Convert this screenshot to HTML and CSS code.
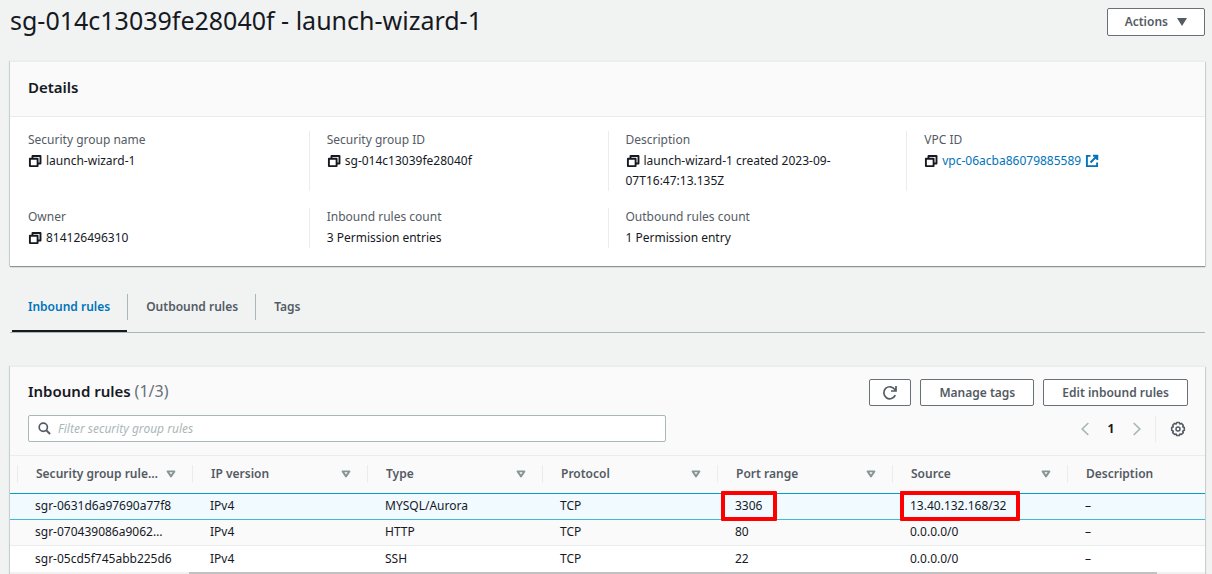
FILE: index.html
```html
<!DOCTYPE html>
<html lang="en">
<head>
<meta charset="utf-8">
<title>sg-014c13039fe28040f - launch-wizard-1</title>
<link rel="stylesheet" href="styles.css">
</head>
<body>
<svg class="sprite" aria-hidden="true">
  <symbol id="copy" viewBox="0 0 14 14"><path d="M4.5 4V2H12.5V9.5H10M1.9 4.7H9.6V12.1H1.9Z" fill="none" stroke="currentColor" stroke-width="1.9" stroke-linejoin="round"/></symbol>
  <symbol id="external" viewBox="0 0 14 14"><path d="M5.500 1.900H1.900V12.100H12.100V8.500M8 1.700H12.300V6M12 2L5.500 8.500" fill="none" stroke="currentColor" stroke-width="1.9"/></symbol>
  <symbol id="sort" viewBox="0 0 10 8"><path d="M1.6 1.4H8.400L5 6.400Z" fill="none" stroke="currentColor" stroke-width="1.900" stroke-linejoin="round"/></symbol>
</svg>
<main class="page">
  <header class="page-header">
    <h1 class="page-title">sg-014c13039fe28040f - launch-wizard-1</h1>
    <button class="button actions" type="button">Actions
      <svg class="caret" viewBox="0 0 10 8" aria-hidden="true"><path d="M0 0H10L5 8Z" fill="currentColor"/></svg>
    </button>
  </header>

  <section class="card">
    <div class="card-header"><h2 class="card-title">Details</h2></div>
    <dl class="details">
      <div class="detail"><dt>Security group name</dt><dd><svg class="icon copy"><use href="#copy"/></svg>launch-wizard-1</dd></div>
      <div class="detail"><dt>Security group ID</dt><dd><svg class="icon copy"><use href="#copy"/></svg>sg-014c13039fe28040f</dd></div>
      <div class="detail"><dt>Description</dt><dd><svg class="icon copy"><use href="#copy"/></svg>launch-wizard-1 created 2023-09-<wbr>07T16:47:13.135Z</dd></div>
      <div class="detail"><dt>VPC ID</dt><dd><svg class="icon copy"><use href="#copy"/></svg><a class="link" href="#vpc">vpc-06acba86079885589<svg class="icon external"><use href="#external"/></svg></a></dd></div>
      <div class="detail"><dt>Owner</dt><dd><svg class="icon copy"><use href="#copy"/></svg>814126496310</dd></div>
      <div class="detail"><dt>Inbound rules count</dt><dd>3 Permission entries</dd></div>
      <div class="detail"><dt>Outbound rules count</dt><dd>1 Permission entry</dd></div>
    </dl>
  </section>

  <nav class="tabs">
    <a class="tab active" href="#inbound">Inbound rules</a>
    <a class="tab" href="#outbound">Outbound rules</a>
    <a class="tab" href="#tags">Tags</a>
  </nav>

  <section class="card rules" id="inbound">
    <div class="rules-header">
      <div class="toolbar">
        <h2 class="card-title">Inbound rules <span class="count">(1/3)</span></h2>
        <div class="buttons">
          <button class="button refresh" type="button" aria-label="Refresh">
            <svg viewBox="0 0 16 16" aria-hidden="true"><path d="M13.3 10.2A6 6 0 1 1 12.8 4.4L14 6M14 1V6H9" fill="none" stroke="currentColor" stroke-width="1.7"/></svg>
          </button>
          <button class="button" type="button">Manage tags</button>
          <button class="button" type="button">Edit inbound rules</button>
        </div>
      </div>
      <div class="toolbar">
        <label class="search">
          <svg viewBox="0 0 14 14" aria-hidden="true"><path d="M9 9L13 13" stroke="currentColor" stroke-width="2.2"/><circle cx="5.7" cy="5.7" r="4.4" fill="none" stroke="currentColor" stroke-width="1.8"/></svg>
          <input type="text" placeholder="Filter security group rules" aria-label="Filter security group rules">
        </label>
        <div class="pager">
          <button class="plain arrow" type="button" aria-label="Previous page"><svg viewBox="0 0 8 14" aria-hidden="true"><path d="M7.3 1L1.2 7L7.3 13" fill="none" stroke="currentColor" stroke-width="1.7"/></svg></button>
          <span class="page-number">1</span>
          <button class="plain arrow" type="button" aria-label="Next page"><svg viewBox="0 0 8 14" aria-hidden="true"><path d="M.7 1L6.8 7L.7 13" fill="none" stroke="currentColor" stroke-width="1.7"/></svg></button>
          <span class="separator"></span>
          <button class="plain settings" type="button" aria-label="Preferences"><svg viewBox="0 0 16 16" aria-hidden="true"><path d="M6.7 1.5h2.6l.6 1.4 1.5-.5 1.9 1.9-.6 1.4 1.6.8v2.8l-1.6.8.6 1.5-1.9 1.9-1.5-.5-.6 1.5H6.7L6.1 13l-1.5.5-1.900-1.900.6-1.500-1.600-.8V6.500l1.600-.8-.6-1.400 1.900-1.900 1.500.5Z" fill="none" stroke="currentColor" stroke-width="1.6" stroke-linejoin="round"/><circle cx="8" cy="8" r="2" fill="none" stroke="currentColor" stroke-width="1.5"/></svg></button>
        </div>
      </div>
    </div>
    <table class="table">
      <colgroup><col class="col-edge"><col class="col"><col class="col"><col class="col"><col class="col"><col class="col"><col class="col"><col></colgroup>
      <thead>
        <tr>
          <td></td>
          <th scope="col"><div class="head">Security group rule…<svg class="sort"><use href="#sort"/></svg></div></th>
          <th scope="col"><div class="head">IP version<svg class="sort"><use href="#sort"/></svg></div></th>
          <th scope="col"><div class="head">Type<svg class="sort"><use href="#sort"/></svg></div></th>
          <th scope="col"><div class="head">Protocol<svg class="sort"><use href="#sort"/></svg></div></th>
          <th scope="col"><div class="head">Port range<svg class="sort"><use href="#sort"/></svg></div></th>
          <th scope="col"><div class="head">Source<svg class="sort"><use href="#sort"/></svg></div></th>
          <th scope="col"><div class="head">Description</div></th>
        </tr>
      </thead>
      <tbody>
        <tr class="selected"><td></td><td>sgr-0631d6a97690a77f8</td><td>IPv4</td><td>MYSQL/Aurora</td><td>TCP</td><td><span class="mark port">3306</span></td><td><span class="mark source">13.40.132.168/32</span></td><td>–</td></tr>
        <tr class="striped"><td></td><td>sgr-070439086a9062…</td><td>IPv4</td><td>HTTP</td><td>TCP</td><td>80</td><td>0.0.0.0/0</td><td>–</td></tr>
        <tr><td></td><td>sgr-05cd5f745abb225d6</td><td>IPv4</td><td>SSH</td><td>TCP</td><td>22</td><td>0.0.0.0/0</td><td>–</td></tr>
      </tbody>
    </table>
    <div class="scroll-track"><div class="scroll-thumb"></div></div>
  </section>
</main>
</body>
</html>
```
FILE: styles.css
```css
* { box-sizing: border-box; }

body {
  margin: 0;
  background: #f1f3f3;
  color: #16191f;
  font: 12px/20px "Noto Sans", "Open Sans", sans-serif;
}

h1, h2, dl, dd { margin: 0; }
button, input { font: inherit; }
a { text-decoration: none; }
svg { flex: none; }
.sprite { display: none; }

.page { padding: 0 7px 0 10px; }

.page-header {
  display: flex;
  justify-content: space-between;
  align-items: flex-start;
  padding-top: 8px;
  margin-bottom: 25px;
}
.page-title {
  font-size: 25px;
  font-weight: 400;
  line-height: 24px;
}

.button {
  display: flex;
  align-items: center;
  justify-content: center;
  height: 27px;
  padding: 0 18px;
  border: 1px solid #687078;
  border-radius: 2px;
  background: #fff;
  color: #545b64;
  font-weight: 600;
  white-space: nowrap;
}
.actions { height: 28px; gap: 9px; padding: 0 17px; }
.caret { width: 10px; height: 8px; }
.refresh { width: 42px; padding: 0; }
.refresh svg { width: 16px; height: 16px; }

.card {
  background: #fff;
  border-top: 1px solid #eaeded;
  box-shadow: 0 1px 1px #879596, 1px 1px 1px #d5dbdb, -1px 0 1px #d5dbdb;
}
.card-header {
  padding: 15px 18px 19px;
  border-bottom: 1px solid #eaeded;
  background: #fafafa;
}
.card-title {
  font-size: 15px;
  font-weight: 600;
  line-height: 20px;
}
.count { color: #687078; font-size: 16px; font-weight: 400; }

.details {
  display: grid;
  grid-template-columns: repeat(4, 1fr);
  row-gap: 17px;
  padding: 14px 0 18px;
}
.detail {
  padding: 0 60px 0 17px;
  border-left: 1px solid #eaeded;
}
.detail:nth-child(4) { padding-right: 0; }
.detail:nth-child(4n + 1) { border-left-color: transparent; }
.detail dt { color: #545b64; line-height: 18px; }
.detail dd { padding-top: 2px; }
.icon { width: 14px; height: 14px; vertical-align: -3px; }
.copy { margin-right: 4px; }
.external { margin-left: 4px; }
.link { color: #0073bb; }

.tabs {
  display: flex;
  align-items: stretch;
  margin-top: 22px;
  padding-left: 2px;
  border-bottom: 1px solid #aab7b8;
}
.tab {
  position: relative;
  padding: 9px 17px 15px 16px;
  color: #545b64;
  font-weight: 600;
}
.tab + .tab { padding-left: 19px; }
.tab + .tab::before {
  content: "";
  position: absolute;
  left: 0;
  top: 6px;
  height: 26px;
  border-left: 1px solid #aab7b8;
}
.tab.active { color: #0073bb; }
.tab.active::after {
  content: "";
  position: absolute;
  left: 0;
  right: 0;
  bottom: 0;
  height: 2px;
  background: #16191f;
}

.rules { margin-top: 33px; }
.rules-header {
  display: grid;
  gap: 9px;
  padding: 12px 17px 13px 18px;
  background: #fafafa;
}
.toolbar {
  display: flex;
  align-items: center;
  justify-content: space-between;
}
.toolbar .card-title { padding-bottom: 3px; }
.buttons { display: flex; gap: 9px; }

.search {
  display: flex;
  align-items: center;
  gap: 7px;
  width: 55%;
  height: 27px;
  padding: 0 9px;
  border: 1px solid #aab7b8;
  border-radius: 2px;
  background: #fff;
  color: #545b64;
}
.search svg { width: 13px; height: 13px; }
.search input {
  flex: 1;
  min-width: 0;
  padding: 0;
  border: 0;
  outline: 0;
  background: none;
}
.search input::placeholder { color: #aab7b8; font-style: italic; opacity: 1; }

.pager { display: flex; align-items: center; padding-right: 2px; }
.plain {
  display: flex;
  padding: 0;
  border: 0;
  background: none;
  color: #545b64;
}
.arrow { color: #aab7b8; }
.arrow svg { width: 8px; height: 14px; }
.page-number { width: 44px; text-align: center; font-weight: 700; }
.separator { height: 26px; margin: 0 14px; border-left: 1px solid #eaeded; }
.settings svg { width: 16px; height: 16px; }

.table {
  width: 100%;
  table-layout: fixed;
  border-spacing: 0;
}
.col-edge { width: 7px; }
.col { width: 175px; }
.table th, .table td { padding: 0; text-align: left; white-space: nowrap; }
.table thead th, .table thead td {
  height: 38px;
  padding-bottom: 2px;
  border-top: 1px solid #eaeded;
  background: #fafafa;
}
.head {
  display: flex;
  align-items: center;
  justify-content: space-between;
  height: 18px;
  padding: 0 16px 0 18px;
  border-left: 1px solid #eaeded;
  color: #545b64;
  font-weight: 600;
}
.sort { width: 10px; height: 8px; color: #879596; }
.table tbody td { height: 26px; padding: 0 0 1px 18px; line-height: 20px; }
.table tbody td:first-child { padding: 0; }
.table .selected td {
  height: 27px;
  border-top: 1px solid #00a1c9;
  border-bottom: 1px solid #44b9d6;
  background: #f1faff;
}
.table .striped td { border-bottom: 1px solid #eaeded; background: #fafafa; }

/* Red frames that call out the port and source of the selected rule */
.mark { position: relative; }
.mark::after {
  content: "";
  position: absolute;
  inset: -6px -15px -7px -14px;
  border: 4px solid #f00;
  border-radius: 1px;
}
.source::after { left: -10px; right: -14px; }

.scroll-track { height: 2px; background: #f1f1f1; }
.scroll-thumb { width: 81%; height: 2px; margin-left: 15%; background: #c1c1c1; }
```
